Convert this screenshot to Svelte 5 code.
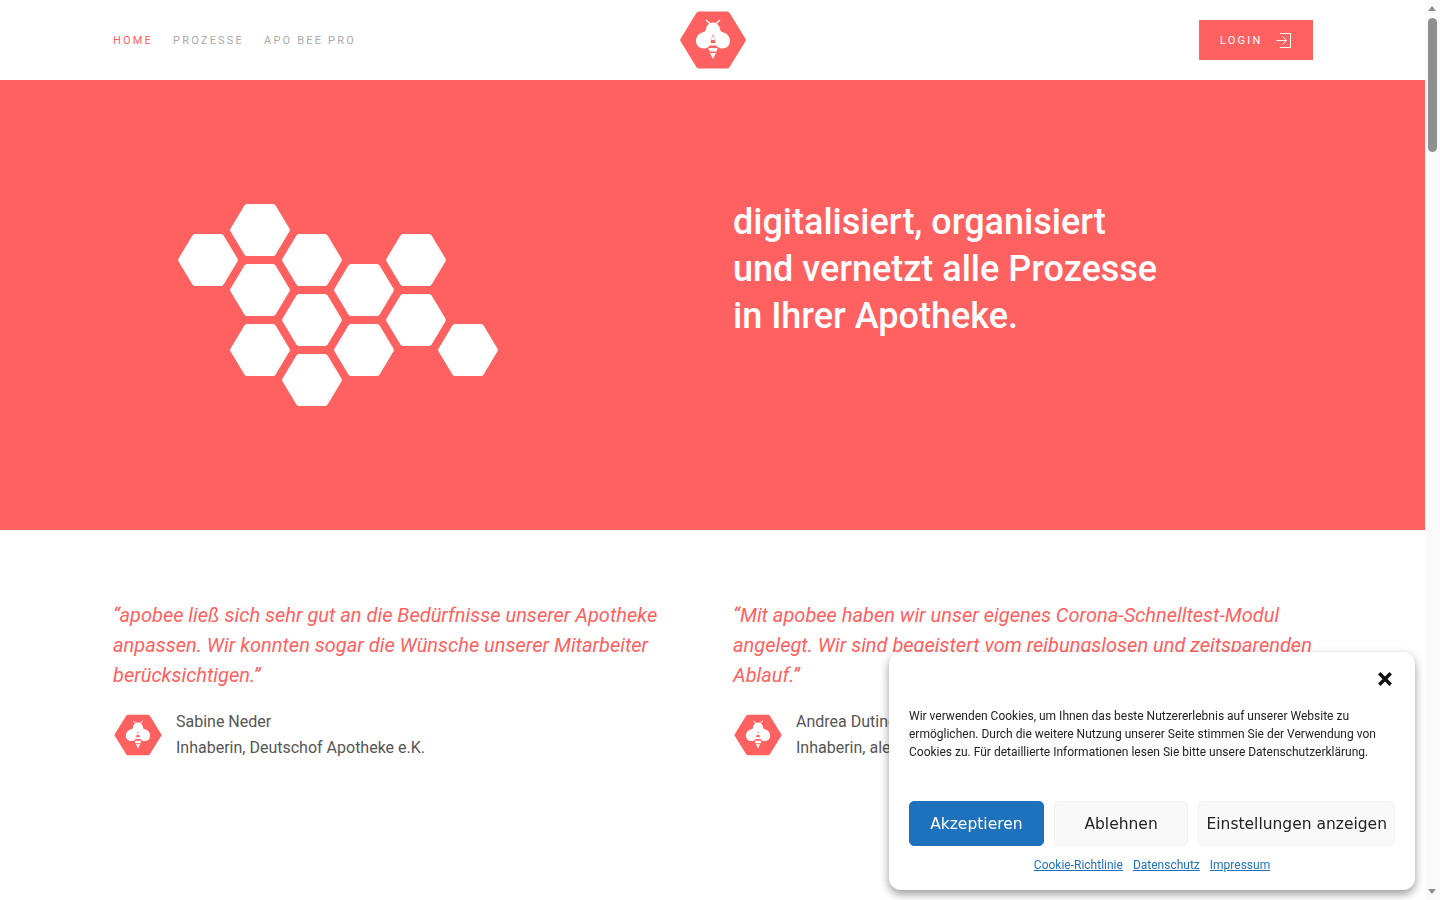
<script>
  const hexes = [
    [30, 30], [82, 0], [82, 60], [82, 120], [134, 30], [134, 90], [134, 150],
    [186, 60], [186, 120], [238, 30], [238, 90], [290, 120]
  ];
  const quotes = [
    {
      text: '“apobee ließ sich sehr gut an die Bedürfnisse unserer Apotheke anpassen. Wir konnten sogar die Wünsche unserer Mitarbeiter berücksichtigen.”',
      name: 'Sabine Neder',
      role: 'Inhaberin, Deutschof Apotheke e.K.'
    },
    {
      text: '“Mit apobee haben wir unser eigenes Corona-Schnelltest-Modul angelegt. Wir sind begeistert vom reibungslosen und zeitsparenden Ablauf.”',
      name: 'Andrea Dutine',
      role: 'Inhaberin, alea Apotheke'
    }
  ];
</script>

{#snippet logo(cls)}
  <svg class={cls} viewBox="0 0 70 60" aria-hidden="true">
    <path class="hexfill" d="M21 1.5h28a3 3 0 0 1 2.6 1.5l16 26a2 2 0 0 1 0 2l-16 26a3 3 0 0 1-2.6 1.5H21a3 3 0 0 1-2.6-1.5l-16-26a2 2 0 0 1 0-2l16-26A3 3 0 0 1 21 1.5z"/>
    <path class="stroke" d="M28.5 10.5l3.5 3M41.500 10.500l-3.500 3"/>
    <path class="white" d="M35 12.500c4 0 6.500 3 7 6.500 .3 1.700 1 2.500 2 3 5 1 8 4.500 8 9 0 4.500-3.500 7.500-8 7.500-3 0-5-1.500-6-4-.8-2-1.500-7.500-3-10-1.500 2.500-2.200 8-3 10-1 2.500-3 4-6 4-4.500 0-8-3-8-7.500 0-4.500 3-8 8-9 1-.5 1.700-1.300 2-3 .5-3.500 3-6.500 7-6.500z"/>
    <path class="white" d="M35 25.500l1.800 4.500h-3.600zM30 33h10l.2 2.500h-10.400zM30.300 38h9.400l-1.200 3.500h-7zM32 43h6l-3 6z"/>
  </svg>
{/snippet}

<header class="top">
  <nav class="nav">
    <a class="active" href="#home">HOME</a>
    <a href="#prozesse">PROZESSE</a>
    <a href="#pro">APO BEE PRO</a>
  </nav>
  {@render logo('logo-main')}
  <div class="login-wrap">
    <a class="login" href="#login">
      <span>LOGIN</span>
      <svg viewBox="0 0 16 15" width="16" height="15" aria-hidden="true">
        <path d="M4 .5h10.500v14H4M.500 7.500h9.500M6.500 3.500l4 4-4 4"/>
      </svg>
    </a>
  </div>
</header>

<section class="hero">
  <div class="hero-left">
    <svg class="combs" viewBox="0 0 320 202" aria-hidden="true">
      {#each hexes as [x, y]}
        <path transform={`translate(${x - 30} ${y})`} d="M17 0h26a3 3 0 0 1 2.600 1.500l13.800 23a3 3 0 0 1 0 3L45.600 50.500a3 3 0 0 1-2.600 1.500H17a3 3 0 0 1-2.600-1.500L.6 27.500a3 3 0 0 1 0-3l13.800-23A3 3 0 0 1 17 0z"/>
      {/each}
    </svg>
  </div>
  <h1>digitalisiert, organisiert<br />und vernetzt alle Prozesse<br />in Ihrer Apotheke.</h1>
</section>

<section class="quotes">
  {#each quotes as q}
    <article>
      <p class="quote">{q.text}</p>
      <div class="person">
        {@render logo('logo-small')}
        <div class="who">
          <div>{q.name}</div>
          <div>{q.role}</div>
        </div>
      </div>
    </article>
  {/each}
</section>

<aside class="cookie">
  <div class="close-row">
    <svg viewBox="0 0 14 14" width="16" height="16" aria-label="Schließen">
      <path d="M2 2l10 10M12 2L2 12"/>
    </svg>
  </div>
  <p>Wir verwenden Cookies, um Ihnen das beste Nutzererlebnis auf unserer Website zu ermöglichen. Durch die weitere Nutzung unserer Seite stimmen Sie der Verwendung von Cookies zu. Für detaillierte Informationen lesen Sie bitte unsere Datenschutzerklärung.</p>
  <div class="buttons">
    <button class="accept">Akzeptieren</button>
    <button class="deny">Ablehnen</button>
    <button class="prefs">Einstellungen anzeigen</button>
  </div>
  <div class="links">
    <a href="#c">Cookie-Richtlinie</a>
    <a href="#d">Datenschutz</a>
    <a href="#i">Impressum</a>
  </div>
</aside>

<div class="scrollbar" aria-hidden="true">
  <span class="arrow up"></span>
  <span class="thumb"></span>
  <span class="arrow down"></span>
</div>

<style>
  :global(body) {
    margin: 0;
    height: 900px;
    overflow: hidden;
    background: #fff;
    font-family: Roboto, "Liberation Sans", sans-serif;
    color: #555;
  }
  a { text-decoration: none; }

  .top {
    width: 1425px;
    height: 80px;
    box-sizing: border-box;
    padding: 0 112px 0 113px;
    display: grid;
    grid-template-columns: 1fr auto 1fr;
    align-items: center;
  }
  .nav {
    display: flex;
    gap: 20px;
    font-size: 11px;
    letter-spacing: 2.2px;
  }
  .nav a { color: #aaa; }
  .nav a.active { color: #ff6161; }
  .logo-main { width: 70px; height: 60px; display: block; }
  .hexfill { fill: #ff6161; }
  .white { fill: #fff; }
  .stroke { fill: none; stroke: #fff; stroke-width: 1.400; stroke-linecap: round; }
  .login-wrap { display: flex; justify-content: flex-end; }
  .login {
    width: 114px;
    height: 40px;
    box-sizing: border-box;
    background: #ff6161;
    color: #fff;
    display: flex;
    align-items: center;
    padding-left: 21px;
    gap: 14px;
    font-size: 11px;
    letter-spacing: 2.2px;
  }
  .login svg { fill: none; stroke: #fff; stroke-width: 1; }

  .hero {
    width: 1425px;
    height: 450px;
    background: #ff6161;
    box-sizing: border-box;
    padding: 124px 0 0 113px;
    display: flex;
  }
  .hero-left { width: 620px; padding-left: 65px; box-sizing: border-box; }
  .combs { display: block; width: 320px; height: 202px; fill: #fff; }
  h1 {
    margin: -5px 0 0;
    color: #fff;
    font-size: 36px;
    line-height: 47px;
    font-weight: 500;
  }

  .quotes {
    width: 1425px;
    box-sizing: border-box;
    padding: 70px 112px 0 113px;
    display: grid;
    grid-template-columns: 580px 580px;
    column-gap: 40px;
  }
  .quote {
    margin: 0;
    font-size: 20px;
    line-height: 30px;
    font-style: italic;
    color: #ff6161;
  }
  .person {
    display: flex;
    align-items: center;
    gap: 13px;
    margin-top: 19px;
  }
  .logo-small { width: 50px; height: 44px; display: block; flex: none; }
  .who { font-size: 16px; line-height: 26px; color: #555; }

  .cookie {
    position: fixed;
    left: 889px;
    top: 652px;
    width: 526px;
    height: 238px;
    box-sizing: border-box;
    padding: 0 20px;
    background: #fff;
    border-radius: 12px;
    box-shadow: 0 4px 10px rgba(0, 0, 0, .4);
    font-size: 12px;
    color: #222;
  }
  .close-row {
    height: 55px;
    display: flex;
    justify-content: flex-end;
    align-items: center;
    padding: 0 2px 0 0;
    position: relative;
    top: -1px;
  }
  .close-row svg { fill: none; stroke: #111; stroke-width: 3; }
  .cookie p { margin: 0; line-height: 18px; font-size: 12px; }
  .buttons {
    display: flex;
    gap: 10px;
    margin-top: 40px;
  }
  button {
    height: 45px;
    border-radius: 5px;
    border: 1px solid #f2f2f2;
    background: #f9f9f9;
    color: #222;
    font-family: "DejaVu Sans", sans-serif;
    font-size: 15.500px;
    padding: 0;
  }
  .accept { width: 135px; background: #1e71bd; border-color: #1e71bd; color: #fff; }
  .deny { width: 135px; }
  .prefs { width: 197px; }
  .links {
    display: flex;
    justify-content: center;
    gap: 10px;
    margin-top: 11px;
    font-size: 12px;
    line-height: 16px;
  }
  .links a { color: #1e71bd; text-decoration: underline; }

  .scrollbar {
    position: fixed;
    right: 0;
    top: 0;
    width: 15px;
    height: 900px;
    background: #fafafa;
  }
  .thumb {
    position: absolute;
    left: 3px;
    top: 18px;
    width: 9px;
    height: 134px;
    border-radius: 5px;
    background: #8f8f8f;
  }
  .arrow {
    position: absolute;
    left: 3px;
    width: 0;
    height: 0;
    border-left: 4.500px solid transparent;
    border-right: 4.500px solid transparent;
  }
  .arrow.up { top: 6px; border-bottom: 5px solid #8f8f8f; }
  .arrow.down { bottom: 6px; border-top: 5px solid #8f8f8f; }
</style>
